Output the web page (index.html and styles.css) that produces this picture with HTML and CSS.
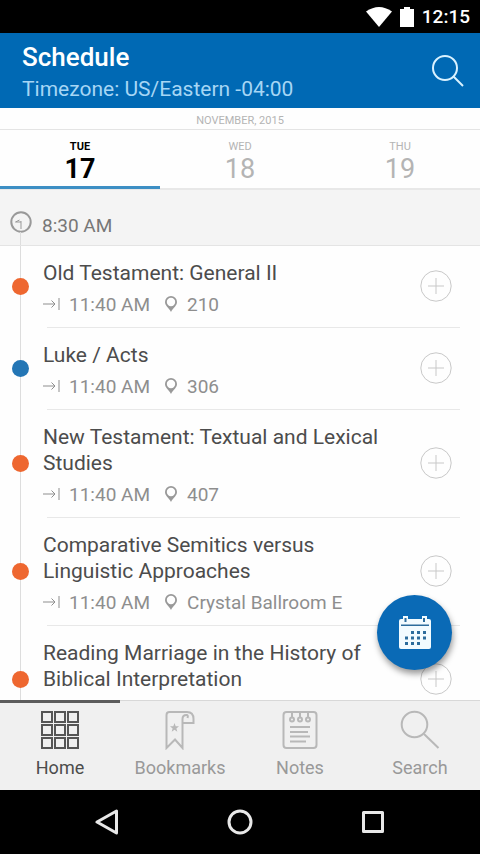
FILE: index.html
```html
<!DOCTYPE html>
<html lang="en">
<head>
<meta charset="utf-8">
<meta name="viewport" content="width=device-width, initial-scale=1">
<title>Schedule</title>
<link rel="stylesheet" href="styles.css">
</head>
<body>
<svg class="sprite" aria-hidden="true">
  <symbol id="arrive" viewBox="0 0 18 14"><path d="M0 7h12M8.500 3.500 12 7l-3.500 3.500M16 1v12"/></symbol>
  <symbol id="pin" viewBox="0 0 12 16"><path fill-rule="evenodd" d="M6 0a6 6 0 0 1 6 6c0 4-3.500 5-6 10C3.500 11 0 10 0 6a6 6 0 0 1 6-6Zm0 1.800a4.200 4.200 0 1 0 0 8.400 4.200 4.200 0 0 0 0-8.400Z"/></symbol>
  <symbol id="plus" viewBox="0 0 32 32"><circle cx="16" cy="16" r="15.200"/><path d="M8 16h16M16 8v16"/></symbol>
</svg>

<div class="status">
  <svg width="26" height="20" viewBox="0 0 26 20"><path d="M0 4.500Q13-4.500 26 4.500L13 20Z"/></svg>
  <svg width="14" height="20" viewBox="0 0 14 20"><path d="M4 0h6v2h4v18H0V2h4Z"/></svg>
  <time>12:15</time>
</div>

<header class="header">
  <div>
    <h1>Schedule</h1>
    <p>Timezone: US/Eastern -04:00</p>
  </div>
  <button class="icon-button" aria-label="Search">
    <svg width="32" height="32" viewBox="0 0 32 32"><circle cx="13" cy="13" r="12"/><path d="m21.500 21.500 9.500 9.500"/></svg>
  </button>
</header>

<div class="month">NOVEMBER, 2015</div>
<div class="days">
  <button class="day active"><span>TUE</span><b>17</b></button>
  <button class="day"><span>WED</span><b>18</b></button>
  <button class="day"><span>THU</span><b>19</b></button>
</div>

<main class="agenda">
  <h2 class="slot">
    <svg width="22" height="34" viewBox="0 0 22 34"><circle cx="11" cy="11" r="9.700"/><path d="M11 10v8M11 11H5.500l4-2"/><path class="stem" d="M10.500 21v13"/></svg>
    8:30 AM
  </h2>
  <ul class="sessions">
    <li class="session">
      <i class="dot"></i>
      <div class="body">
        <div class="text"><h3>Old Testament: General II</h3>
          <p><svg class="arrive"><use href="#arrive"/></svg><span>11:40 AM</span><svg class="pin"><use href="#pin"/></svg><span>210</span></p></div>
        <button class="add" aria-label="Add Old Testament: General II"><svg><use href="#plus"/></svg></button>
      </div>
    </li>
    <li class="session">
      <i class="dot blue"></i>
      <div class="body">
        <div class="text"><h3>Luke / Acts</h3>
          <p><svg class="arrive"><use href="#arrive"/></svg><span>11:40 AM</span><svg class="pin"><use href="#pin"/></svg><span>306</span></p></div>
        <button class="add" aria-label="Add Luke / Acts"><svg><use href="#plus"/></svg></button>
      </div>
    </li>
    <li class="session">
      <i class="dot"></i>
      <div class="body">
        <div class="text"><h3>New Testament: Textual and Lexical Studies</h3>
          <p><svg class="arrive"><use href="#arrive"/></svg><span>11:40 AM</span><svg class="pin"><use href="#pin"/></svg><span>407</span></p></div>
        <button class="add" aria-label="Add New Testament"><svg><use href="#plus"/></svg></button>
      </div>
    </li>
    <li class="session">
      <i class="dot"></i>
      <div class="body">
        <div class="text"><h3>Comparative Semitics versus Linguistic Approaches</h3>
          <p><svg class="arrive"><use href="#arrive"/></svg><span>11:40 AM</span><svg class="pin"><use href="#pin"/></svg><span>Crystal Ballroom E</span></p></div>
        <button class="add" aria-label="Add Comparative Semitics"><svg><use href="#plus"/></svg></button>
      </div>
    </li>
    <li class="session">
      <i class="dot"></i>
      <div class="body">
        <div class="text"><h3>Reading Marriage in the History of Biblical Interpretation</h3>
          <p></p></div>
        <button class="add" aria-label="Add Reading Marriage"><svg><use href="#plus"/></svg></button>
      </div>
    </li>
  </ul>
</main>

<div class="dock">
  <button class="fab" aria-label="Calendar">
    <svg width="34" height="34" viewBox="0 0 34 34">
      <path class="page" d="M3 3h2V0h5v3h14V0h5v3h2a2 2 0 0 1 2 2v26a2 2 0 0 1-2 2H3a2 2 0 0 1-2-2V5a2 2 0 0 1 2-2Z"/>
      <path class="mark" d="M6.500 2h2v4h-2zM25 2h2v4h-2zM3 8.500h28v1.500H3zM13 15h3v3h-3zM19 15h3v3h-3zM25 15h3v3h-3zM7 20.500h3v3H7zM13 20.500h3v3h-3zM19 20.500h3v3h-3zM25 20.500h3v3h-3zM7 26h3v3H7zM13 26h3v3h-3zM19 26h3v3h-3z"/>
    </svg>
  </button>
  <nav class="tabs">
    <a class="tab active" href="#home">
      <svg width="40" height="40" viewBox="0 0 40 40"><path d="M2 2h10v10H2zM15 2h10v10H15zM28 2h10v10H28zM2 15h10v10H2zM15 15h10v10H15zM28 15h10v10H28zM2 28h10v10H2zM15 28h10v10H15zM28 28h10v10H28z"/></svg>
      Home</a>
    <a class="tab" href="#bookmarks">
      <svg width="40" height="40" viewBox="0 0 40 40"><path d="M22.500 11.500V38L15 29.500 6.500 38V5q0-3 3-3H27q6.500 0 6.500 7v4H22.500M22.500 12V9q0-4 4-4 2 0 1 3"/><path class="solid" d="m14.500 13 1.200 3.200 3.300.1-2.600 2.100.9 3.300-2.800-1.900-2.800 1.900.9-3.300-2.600-2.100 3.300-.1Z"/></svg>
      Bookmarks</a>
    <a class="tab" href="#notes">
      <svg width="40" height="40" viewBox="0 0 40 40"><rect x="3.500" y="2" width="33" height="36" rx="3"/><path d="M12 2v6M20 2v6M28 2v6M10 17h20M10 22h18M10 26.500h20M10 31.500h16"/><circle cx="12" cy="9.500" r="2"/><circle cx="20" cy="9.500" r="2"/><circle cx="28" cy="9.500" r="2"/></svg>
      Notes</a>
    <a class="tab" href="#search">
      <svg width="40" height="40" viewBox="0 0 40 40"><circle cx="14.500" cy="14.500" r="12.800"/><path d="m24 24 14.500 14"/></svg>
      Search</a>
  </nav>
</div>

<div class="system">
  <button aria-label="Back"><svg width="26" height="26" viewBox="0 0 26 26"><path d="M22.500 2v22L3 13Z"/></svg></button>
  <button aria-label="Home screen"><svg width="26" height="26" viewBox="0 0 26 26"><circle cx="13" cy="13" r="11"/></svg></button>
  <button aria-label="Recent apps"><svg width="26" height="26" viewBox="0 0 26 26"><path d="M3.500 3.500h19v19h-19z"/></svg></button>
</div>
</body>
</html>
```
FILE: styles.css
```css
* { box-sizing: border-box; }

body {
  margin: 0;
  height: 100vh;
  display: flex;
  flex-direction: column;
  background: #fefefe;
  color: #4c4c4c;
  font-family: Roboto, "Liberation Sans", sans-serif;
}

h1, h2, h3, p, ul { margin: 0; padding: 0; font-weight: 400; }
button { margin: 0; padding: 0; border: 0; background: none; color: inherit; font: inherit; }
svg { display: block; flex: none; fill: none; stroke: currentColor; }
.sprite { position: absolute; width: 0; height: 0; }

.status {
  flex: none;
  display: flex;
  align-items: center;
  justify-content: flex-end;
  gap: 8px;
  height: 33px;
  padding-right: 10px;
  background: #000;
  color: #fff;
  font-size: 19px;
  font-weight: 500;
}
.status svg { fill: #fff; stroke: none; }

.header {
  flex: none;
  display: flex;
  align-items: center;
  justify-content: space-between;
  height: 75px;
  padding: 0 16px 0 22px;
  background: #0069b4;
  color: #a6d6f5;
}
.header h1 { padding-top: 5px; color: #fff; font-size: 26px; line-height: 32px; font-weight: 500; }
.header p { font-size: 21px; line-height: 32px; }
.icon-button { color: #d9f2ff; stroke-width: 2; }

.month {
  flex: none;
  height: 22px;
  border-bottom: 1px solid #e4e4e4;
  color: #b4b4b4;
  font-size: 11px;
  line-height: 25px;
  text-align: center;
}

.days { flex: none; display: flex; border-bottom: 2px solid #e8e8e8; }
.day {
  flex: 1;
  display: flex;
  flex-direction: column;
  align-items: center;
  height: 59px;
  padding-top: 10px;
  margin-bottom: -1px;
  border-bottom: 3px solid transparent;
  color: #b4b4b4;
}
.day span { font-size: 11px; line-height: 14px; }
.day b { font-size: 27px; line-height: 30px; font-weight: 400; }
.day.active { border-color: #3d8fc4; color: #000; }
.day.active span, .day.active b { font-weight: 700; }

.agenda { flex: 1; min-height: 0; overflow: hidden; }
.slot {
  display: flex;
  align-items: flex-end;
  gap: 10px;
  height: 56px;
  padding-left: 10px;
  background: #f4f4f4;
  border-bottom: 1px solid #e4e4e4;
  color: #777;
  font-size: 19px;
  line-height: 38px;
}
.slot svg { stroke-width: 2; color: #999; }
.slot path { stroke-width: 1; }
.slot .stem { stroke: #ddd; }

.sessions { list-style: none; }
.session {
  display: grid;
  grid-template-columns: 41px 1fr;
  align-items: center;
  background: linear-gradient(#ddd, #ddd) 20px 0 / 1px 100% no-repeat;
}
.dot { justify-self: center; width: 17px; height: 17px; margin-bottom: 2px; border-radius: 50%; background: #ee6730; }
.dot.blue { background: #2476b5; }
.body {
  display: flex;
  align-items: center;
  justify-content: space-between;
  margin-right: 20px;
  padding: 14px 8px 8px 2px;
  background: linear-gradient(#e8e8e8, #e8e8e8) 6px 100% / 100% 1px no-repeat;
}
.text { flex: 1; max-width: 350px; }
.text h3 { font-size: 21px; line-height: 26px; }
.text p {
  display: flex;
  align-items: center;
  height: 34px;
  padding-top: 2px;
  color: #8e8e8e;
  font-size: 19px;
}
.arrive { width: 18px; height: 14px; margin-right: 8px; }
.pin { width: 12px; height: 16px; margin: 0 10px 0 15px; fill: #999; stroke: none; }
.add { margin-bottom: 8px; color: #c8c8c8; }
.add svg { width: 32px; height: 32px; }

.dock { flex: none; position: relative; }
.fab {
  position: absolute;
  right: 28px;
  bottom: 120px;
  display: grid;
  place-items: center;
  width: 75px;
  height: 75px;
  border-radius: 50%;
  background: #0a6ab6;
  box-shadow: 1px 4px 6px rgba(0, 0, 0, 0.4);
}
.fab svg { stroke: none; }
.fab .page { fill: #f2fbff; }
.fab .mark { fill: #2c6c9c; }

.tabs { display: flex; height: 90px; background: #f0f0f0; }
.tab {
  flex: 1;
  display: flex;
  flex-direction: column;
  align-items: center;
  padding-top: 9px;
  border-top: 1px solid #d8d8d8;
  color: #999;
  font-size: 18px;
  line-height: 36px;
  text-decoration: none;
}
.tab svg { color: #b8b8b8; stroke-width: 2; }
.tab .solid { fill: currentColor; stroke: none; }
.tab.active { padding-top: 7px; border-top: 3px solid #5c5c5c; color: #4c4c4c; }
.tab.active svg { color: #555; }

.system {
  flex: none;
  display: flex;
  align-items: center;
  justify-content: center;
  gap: 107px;
  height: 64px;
  background: #000;
  color: #e8e8e8;
}
.system svg { stroke-width: 3; stroke-linejoin: round; }
```
